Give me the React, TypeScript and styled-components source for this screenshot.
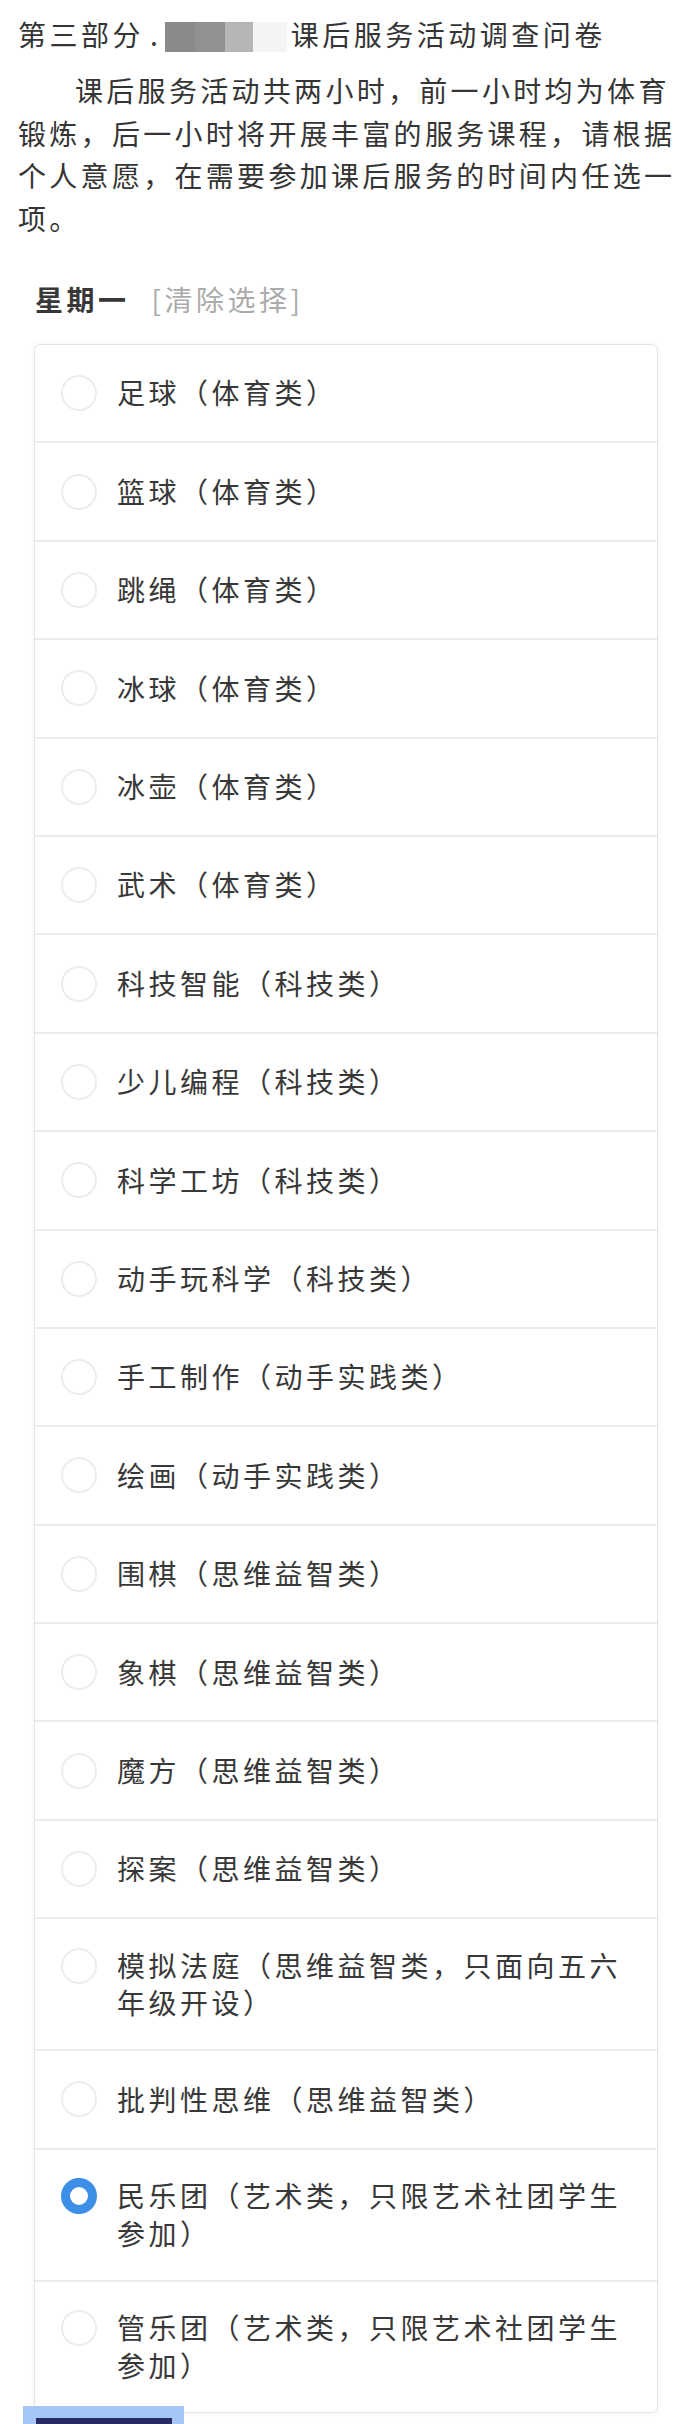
import React from "react";
import styled, { createGlobalStyle } from "styled-components";

const GlobalStyle = createGlobalStyle`
  html, body {
    margin: 0;
    padding: 0;
    background: #ffffff;
    overflow: hidden;
  }
  body {
    font-family: "Noto Sans CJK SC", "Noto Sans", sans-serif;
    color: #333333;
  }
`;

const Page = styled.div`
  width: 676px;
  height: 2424px;
  overflow: hidden;
  box-sizing: border-box;
  padding: 13px 0 0 18px;
  background: #ffffff;
`;

const Title = styled.h1`
  margin: 0;
  width: 658px;
  font-size: 28px;
  font-weight: 400;
  line-height: 42px;
  letter-spacing: 3.5px;
  color: #353535;
  white-space: nowrap;
`;

const Dot = styled.span`
  margin-left: 6px;
  letter-spacing: 7px;
`;

const Redacted = styled.span`
  display: inline-block;
  width: 122px;
  height: 30px;
  margin-right: 4px;
  vertical-align: -6px;
  background: linear-gradient(
    to right,
    #8a8a8a 0,
    #8a8a8a 30px,
    #919191 30px,
    #919191 60px,
    #b6b6b6 60px,
    #b6b6b6 88px,
    #f4f4f6 88px,
    #f4f4f6 122px
  );
`;

const Intro = styled.p`
  margin: 14px 0 0 0;
  width: 658.5px;
  font-size: 28px;
  line-height: 42.5px;
  letter-spacing: 3.3px;
  text-indent: 57px;
  color: #353535;
`;

const Question = styled.section`
  margin: 39px 0 0 16px;
  width: 624px;
`;

const QuestionHeader = styled.div`
  display: flex;
  align-items: center;
  padding-left: 1px;
  height: 42px;
  font-size: 28px;
  line-height: 42px;
  letter-spacing: 3.5px;
`;

const DayLabel = styled.span`
  font-weight: 700;
  color: #383838;
`;

const ClearLink = styled.span`
  margin-left: 22px;
  color: #ababab;
  font-weight: 400;
`;

const OptionCard = styled.div`
  margin-top: 24px;
  border: 1px solid #e4e4e4;
  border-radius: 6px;
  background: #ffffff;
  box-shadow: 0 0 6px rgba(0, 0, 0, 0.05);
  overflow: hidden;
`;

const OptionRow = styled.div`
  display: flex;
  align-items: center;
  box-sizing: border-box;
  min-height: 98.4px;
  padding: 27.5px 20px 27.5px 26px;
  border-bottom: 2px solid #ececec;

  &:last-child {
    border-bottom: none;
  }
`;

const OptionInner = styled.div`
  display: flex;
  align-items: flex-start;
  gap: 20px;
`;

const RadioSlot = styled.div`
  flex: 0 0 36px;
  height: 37.5px;
  display: flex;
  align-items: center;
  justify-content: center;
`;

const Radio = styled.span<{ $checked: boolean }>`
  display: block;
  box-sizing: border-box;
  width: 36px;
  height: 36px;
  border-radius: 50%;
  background: #ffffff;
  border: ${(p) => (p.$checked ? "9px solid #3d8ee6" : "2px solid #ededed")};
`;

const OptionText = styled.span`
  width: 520px;
  font-size: 28px;
  line-height: 37.5px;
  letter-spacing: 3.5px;
  color: #383838;
`;

const Footer = styled.div`
  position: relative;
  margin: -7px 0 0 5px;
  width: 161px;
  box-sizing: border-box;
  padding: 12px 12px 0 13px;
  background: #a3c6f5;
`;

const SubmitButton = styled.div`
  height: 44px;
  background: #282b68;
`;

const options: string[] = [
  "足球（体育类）",
  "篮球（体育类）",
  "跳绳（体育类）",
  "冰球（体育类）",
  "冰壶（体育类）",
  "武术（体育类）",
  "科技智能（科技类）",
  "少儿编程（科技类）",
  "科学工坊（科技类）",
  "动手玩科学（科技类）",
  "手工制作（动手实践类）",
  "绘画（动手实践类）",
  "围棋（思维益智类）",
  "象棋（思维益智类）",
  "魔方（思维益智类）",
  "探案（思维益智类）",
  "模拟法庭（思维益智类，只面向五六年级开设）",
  "批判性思维（思维益智类）",
  "民乐团（艺术类，只限艺术社团学生参加）",
  "管乐团（艺术类，只限艺术社团学生参加）",
];

const SELECTED = 18;

export default function App() {
  return (
    <>
      <GlobalStyle />
      <Page>
        <Title>
          第三部分<Dot>.</Dot>
          <Redacted />
          课后服务活动调查问卷
        </Title>
        <Intro>
          课后服务活动共两小时，前一小时均为体育锻炼，后一小时将开展丰富的服务课程，请根据个人意愿，在需要参加课后服务的时间内任选一项。
        </Intro>
        <Question>
          <QuestionHeader>
            <DayLabel>星期一</DayLabel>
            <ClearLink>[清除选择]</ClearLink>
          </QuestionHeader>
          <OptionCard>
            {options.map((label, i) => (
              <OptionRow key={label}>
                <OptionInner>
                  <RadioSlot>
                    <Radio $checked={i === SELECTED} />
                  </RadioSlot>
                  <OptionText>{label}</OptionText>
                </OptionInner>
              </OptionRow>
            ))}
          </OptionCard>
        </Question>
        <Footer>
          <SubmitButton />
        </Footer>
      </Page>
    </>
  );
}
